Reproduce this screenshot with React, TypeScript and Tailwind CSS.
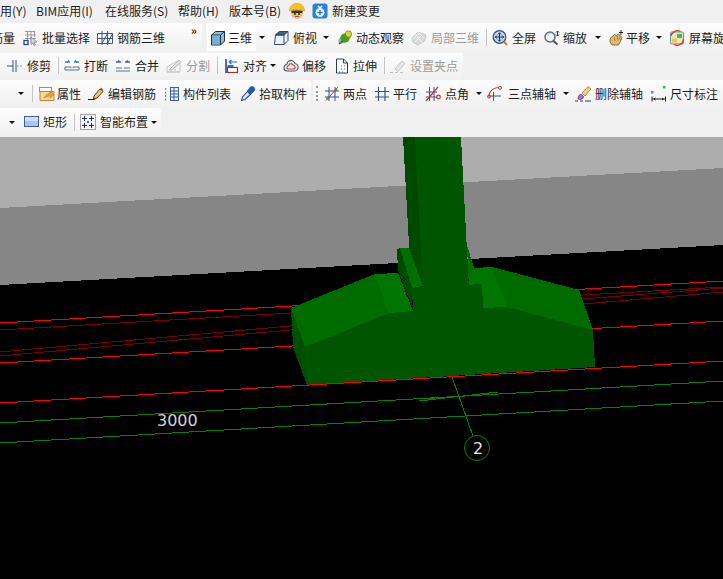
import type { ReactNode } from 'react';

const Ico = ({ children }: { children: ReactNode }) => (
    <svg width="16" height="16" viewBox="0 0 16 16" fill="none" className="shrink-0">
        {children}
    </svg>
);

const Caret = ({ className = '' }: { className?: string }) => (
    <span className={`w-0 h-0 border-x-[3px] border-x-transparent border-t-[3px] border-t-[#111] shrink-0 ${className}`} />
);

const Sep = ({ className = '' }: { className?: string }) => (
    <span className={`w-px h-[17px] bg-[#c4c4c4] shrink-0 ${className}`} />
);

function Tool({
    icon,
    label,
    className = '',
    gray = false,
    gap = 'gap-1',
}: {
    icon: ReactNode;
    label: string;
    className?: string;
    gray?: boolean;
    gap?: string;
}) {
    return (
        <span className={`flex items-center shrink-0 whitespace-nowrap ${gap} ${gray ? 'text-[#9a9a9a]' : ''} ${className}`}>
            {icon}
            <span>{label}</span>
        </span>
    );
}

const icons = {
    batch: (
        <Ico>
            <path d="M2 1.500h10M2 5h11M2 8.500h11M4.500 1v9M8 1v9M11.500 1v6" stroke="#9a9aa5" />
            <rect x="1" y="10.500" width="4" height="4" stroke="#2340a8" strokeWidth="1.300" fill="#fff" />
            <path d="M8 7l6 5-3 .5 1.500 2.500-1.500.5-1-2.500-2 1.500z" fill="#d8d8d8" stroke="#777" strokeWidth=".7" />
        </Ico>
    ),
    rebar3d: (
        <Ico>
            <path d="M.5 3.500h15v10H.5zM5 1v14M10.500 1v14M.5 8.500h15M5 13.500l5.500-10M10.500 13.500l5-10" stroke="#39588c" />
        </Ico>
    ),
    cube: (
        <Ico>
            <path d="M1.500 5l4-3.500h9v9.500l-4 4h-9z" fill="#8dbde0" stroke="#20303f" />
            <path d="M1.500 5h9v10M10.500 5l4-3.500" stroke="#20303f" />
            <path d="M2 5.500h8v9H2z" fill="#79aed6" />
        </Ico>
    ),
    topView: (
        <Ico>
            <path d="M2.500 5l4-3.500h8.500v9l-4 4H1.500z" fill="#e8f2fa" stroke="#2b4a66" />
            <path d="M6.500 1.500h8.500l-4 3.500H2.500z" fill="#32648f" stroke="#2b4a66" />
            <path d="M2.500 5h8.500v10" stroke="#2b4a66" />
        </Ico>
    ),
    orbit: (
        <Ico>
            <ellipse cx="8" cy="8" rx="8" ry="3.800" transform="rotate(-38 8 8)" fill="#a3aea9" />
            <circle cx="8" cy="8" r="4.600" fill="#4e9a22" />
            <circle cx="11.500" cy="4" r="3.200" fill="#cdd92c" stroke="#5f7e14" strokeWidth=".6" />
            <path d="M2 14l4-3" stroke="#2f6a20" strokeWidth="1.500" />
        </Ico>
    ),
    localCube: (
        <Ico>
            <path d="M1 8l6-6 8 3-1.500 6-6.500 4-5-3z" fill="#d9d9d9" stroke="#c6c6c6" />
            <path d="M4.500 4.500l7 8M7.500 2.500l6 6M1.500 9l7-6M4 12l7-7" stroke="#f3f3f3" />
        </Ico>
    ),
    fullscreen: (
        <Ico>
            <circle cx="7.500" cy="7" r="6.300" fill="#c6d5ec" stroke="#32477a" strokeWidth="1.200" />
            <path d="M7.500 2.800v8.400M3.300 7h8.400M6 4.300l1.500-1.500L9 4.300M6 9.700l1.500 1.500L9 9.700M4.800 5.500L3.300 7l1.500 1.500M10.200 5.500L11.700 7l-1.500 1.500" stroke="#1f2f66" />
            <path d="M12 11.500l3 3.500" stroke="#c08a28" strokeWidth="2" />
        </Ico>
    ),
    zoom: (
        <Ico>
            <circle cx="6" cy="7" r="5" fill="#eef2f6" stroke="#5f6b78" strokeWidth="1.500" />
            <path d="M3.500 6a3 3 0 013-2.500" stroke="#b9c3cf" />
            <path d="M9.500 11l4 3.500" stroke="#46505c" strokeWidth="2" />
            <path d="M13.500 1v5M12 2.500L13.500 1 15 2.500M12 4.500L13.500 6 15 4.500" stroke="#333" />
        </Ico>
    ),
    pan: (
        <Ico>
            <path d="M1 12c-.5-3 1-5.500 3-6l1.500-1.500 2 1 2-1.500 2 2 1.500 1.500-1.500 4-2 3.500H3z" fill="#dcbb74" stroke="#6f5424" strokeWidth=".8" />
            <path d="M5 7l1 4M8 6l1 4.500M10.500 6l.5 4" stroke="#8d6c30" strokeWidth=".7" />
            <path d="M12 0v5M10 2.500h4" stroke="#222" />
        </Ico>
    ),
    rotate: (
        <Ico>
            <rect x="1.500" y="2" width="13" height="12" rx="1" fill="#dcebc0" stroke="#6c8fa8" />
            <rect x="3" y="8.500" width="5" height="4" fill="#e9c94a" />
            <rect x="8" y="4" width="5" height="4" fill="#58ad47" />
            <path d="M2 6a6.500 6.500 0 019.500-4.500M14.500 9a6.500 6.500 0 01-9.500 5.500" stroke="#e0342a" strokeWidth="1.300" />
        </Ico>
    ),
    trim: (
        <Ico>
            <path d="M6 2v12M9 2v12" stroke="#34518a" />
            <path d="M0 8h6" stroke="#34518a" />
            <path d="M10 8h1.500M13 8h2" stroke="#7f93bb" />
        </Ico>
    ),
    split: (
        <Ico>
            <path d="M1 4h5M10 4h5M3 4l2-1.500M13 4l-2-1.500" stroke="#2f84d6" strokeWidth="1.400" />
            <path d="M1 9v3h14V9H9v1M7 10V9H1" stroke="#5e7492" />
        </Ico>
    ),
    merge: (
        <Ico>
            <path d="M1 4h5M10 4h5M5 4L3 2.500M11 4l2-1.500" stroke="#3a66b8" strokeWidth="1.400" />
            <path d="M1 10h6M9 10h6M1 13h14" stroke="#5e7492" />
        </Ico>
    ),
    cut: (
        <Ico>
            <path d="M1 14V9l10-6 3 1v10zM1 14h13M5 9v5M9 6v8" stroke="#c8c8c8" />
            <path d="M3 12L13 2l2 2-8 7z" fill="#e3e3e3" stroke="#bcbcbc" />
        </Ico>
    ),
    align: (
        <Ico>
            <path d="M2 1v14" stroke="#1d3d92" strokeWidth="1.500" />
            <rect x="3.500" y="9.500" width="10" height="5" fill="#fff" stroke="#a02b30" strokeWidth="1.200" />
            <rect x="3.500" y="7" width="6" height="2" fill="#2c6fc2" />
            <path d="M5 4h8M5 4l2.500-2M5 4l2.500 2" stroke="#2c6fc2" strokeWidth="1.200" />
        </Ico>
    ),
    offset: (
        <Ico>
            <path d="M1 10c0-3 2-3.500 3-4 .5-3 3-4 5-3.500 2 .3 2.500 2 3 3 2.500.5 3.500 2.500 3 4.500-.5 2.500-2 3-4 3H4c-2 0-3-1-3-3z" fill="#f3f0ee" stroke="#4a566b" strokeWidth="1.100" />
            <path d="M4 10c0-2 1.500-2 2-3 .5-1.500 2.500-2 3.500-.5.5 1 1.800.7 2.500 2 .5 1.500 0 2.500-2 2.500H5.500C4.500 11 4 10.700 4 10z" stroke="#d8413a" strokeWidth="1.200" />
        </Ico>
    ),
    stretch: (
        <Ico>
            <path d="M2.500 1h7l4 4v10h-11z" fill="#fff" stroke="#2f3c58" />
            <path d="M9.500 1v4h4" stroke="#2f3c58" />
            <path d="M7 8h1M10 8h1M7 11h1M10 11h1M5 14h1M8 14h1" stroke="#607090" />
        </Ico>
    ),
    grip: (
        <Ico>
            <path d="M0 14.500h3M5 14.500h3M10 14.500h3" stroke="#bdbdbd" strokeWidth="1.200" />
            <path d="M5 11l7-8 3 2.500-7 8z" fill="#e6e6e6" stroke="#c2c2c2" />
        </Ico>
    ),
    attr: (
        <Ico>
            <rect x=".5" y="1.500" width="12" height="4" fill="#fff" stroke="#c4823c" />
            <path d="M1 5.500h14v9H1z" fill="#f6d98e" stroke="#c4823c" />
            <path d="M5 12c2-3 4-4.500 6-5v-2l4 3.500-4 3.500v-2c-2 0-4 .5-6 2z" fill="#e8a63c" stroke="#97651c" strokeWidth=".5" />
        </Ico>
    ),
    editBar: (
        <Ico>
            <path d="M0 13.500h6l2-1.500 1-.5" stroke="#222" strokeWidth="1.200" />
            <path d="M6 10l6-7 3 2.500-6 6.500-3.500 1z" fill="#e6c878" stroke="#5a3c1c" />
            <path d="M12 3l1-1.500 2.500 2.500-1 1z" fill="#c04436" />
        </Ico>
    ),
    list: (
        <Ico>
            <path d="M1 3h2M1 6.500h2M1 10h2M1 13.500h2" stroke="#4f6f96" strokeWidth="1.400" strokeDasharray="1.200 .8" />
            <rect x="6.500" y="1.500" width="8" height="13" fill="#eef3f9" stroke="#3b5f92" />
            <path d="M7 5h7M7 8h7M7 11h7M10 2v12" stroke="#3b5f92" />
        </Ico>
    ),
    pick: (
        <Ico>
            <path d="M1.500 14.500l1-3.500 5-5.500 3 3-5.500 5z" fill="#dbe9f7" stroke="#244c96" strokeWidth="1.100" />
            <path d="M7.500 4.500l1-1 2-2.500c1-1 2.500-.5 3.500.5s1 2.500 0 3.500l-2 2-1 1z" fill="#2559ad" stroke="#1c3e80" strokeWidth=".7" />
        </Ico>
    ),
    twoPoint: (
        <Ico>
            <path d="M5 1v14M11 1v14M1 5h14M1 11h14" stroke="#3a5186" />
            <path d="M2 14.500L14 1" stroke="#cf2c2c" />
            <circle cx="3.500" cy="12.500" r="1.300" fill="#4e8f2e" />
            <circle cx="12" cy="3.500" r="1.300" fill="#4e8f2e" />
        </Ico>
    ),
    parallel: (
        <Ico>
            <path d="M4.500 1v14M11 1v14M1 5.500h14M1 11h14" stroke="#3a5186" strokeWidth="1.200" />
        </Ico>
    ),
    angle: (
        <Ico>
            <path d="M4.500 1v14M9 1v14M1 6h11M1 11h11" stroke="#3a5186" />
            <path d="M1 15L13 1" stroke="#cf2c2c" strokeWidth="1.200" />
            <circle cx="13.500" cy="11" r="1.800" stroke="#cf2c2c" strokeWidth="1.200" />
        </Ico>
    ),
    arc: (
        <Ico>
            <path d="M6.500 6v9M1 10h13" stroke="#3a5186" />
            <path d="M2 10c.5-4.500 4-8 9-8.500" stroke="#cf2c2c" strokeWidth="1.200" />
            <circle cx="13" cy="1.800" r="1.500" stroke="#cf2c2c" />
            <circle cx="2" cy="10.500" r="1.500" stroke="#cf2c2c" />
        </Ico>
    ),
    eraser: (
        <Ico>
            <path d="M0 15h3M5 15h3M10 15h6" stroke="#335" />
            <path d="M3 13c0-2.500 1-4 3-5l3 3c-1 2-3 3-6 2z" fill="#9c78b8" stroke="#5a3d78" strokeWidth=".7" />
            <path d="M7 7l6-6.500 3 2.500-6 7z" fill="#e8d08a" stroke="#8f6a2a" strokeWidth=".7" />
        </Ico>
    ),
    dim: (
        <Ico>
            <rect x="0" y="5" width="2.500" height="2.500" fill="#46b04a" />
            <rect x="12" y="0" width="2.500" height="2.500" fill="#46b04a" />
            <path d="M1 10.500v5M14.500 10.500v5M1 13h13.500M3 13l1.500-1M3 13l1.500 1M12.500 13L11 12M12.500 13L11 14" stroke="#222" />
        </Ico>
    ),
    rect: (
        <Ico>
            <rect x=".5" y="2.500" width="14" height="10" fill="#a9c4f0" stroke="#3d5fa6" />
            <rect x="1" y="3" width="13" height="4" fill="#d0e0f8" />
        </Ico>
    ),
    smart: (
        <Ico>
            <rect x=".5" y=".5" width="15" height="15" fill="#f4f4f4" stroke="#555" strokeDasharray="1 1" />
            <path d="M4.500 2v5M2 4.500h5M11.500 2v5M9 4.500h5M4.500 9v5M2 11.500h5M11.500 9v5M9 11.500h5" stroke="#26304a" />
            <rect x="7" y="7" width="2" height="2" fill="#2f6ac0" />
        </Ico>
    ),
};

const rows = 'h-[27px] flex items-center bg-linear-to-b from-[#fdfdfd] to-[#f0f0f0]';

export default function App() {
    return (
        <div
            className="w-[723px] h-[579px] overflow-hidden bg-[#f0f0f0] text-[12px] text-[#1c1c1c] flex flex-col"
            style={{ fontFamily: '"Noto Sans CJK SC", "Noto Sans", sans-serif' }}
        >
            {/* menu */}
            <div className="h-[23px] flex items-center whitespace-nowrap">
                <span className="w-[36px]">用(Y)</span>
                <span className="w-[69px]">BIM应用(I)</span>
                <span className="w-[73px]">在线服务(S)</span>
                <span className="w-[51px]">帮助(H)</span>
                <span className="w-[60px]">版本号(B)</span>
                <svg width="16" height="16" viewBox="0 0 16 16" className="shrink-0">
                    <circle cx="8" cy="10" r="6" fill="#e8b98c" />
                    <path d="M.5 8C.5 3 4 .5 8 .5s7.500 2.500 7.500 7.500l-3.500-1.500H4z" fill="#f5c518" stroke="#c08c10" strokeWidth=".5" />
                    <path d="M2 8c1.500-.8 10.500-.8 12 0l-1 2H3z" fill="#4a2e18" />
                    <circle cx="6" cy="11" r=".9" fill="#222" />
                    <circle cx="10" cy="11" r=".9" fill="#222" />
                    <path d="M6 13.500h4" stroke="#a0503c" />
                </svg>
                <svg width="16" height="16" viewBox="0 0 16 16" className="ml-[7px] mr-[4px] shrink-0">
                    <rect x=".5" y=".5" width="15" height="15" rx="3" fill="#2f7fd8" />
                    <circle cx="8" cy="9.500" r="4.500" fill="#d8ecfb" />
                    <path d="M6 3l2 2 2-2" stroke="#fff" strokeWidth="1.300" fill="none" />
                    <path d="M5.500 9.500h5M8 7v5" stroke="#2268bc" strokeWidth="1.200" />
                </svg>
                <span>新建变更</span>
            </div>

            {/* row 2 */}
            <div className="h-[30px] flex items-center gap-[4px]">
                <div className="w-[202px] h-full flex items-center bg-linear-to-b from-[#fdfdfd] to-[#f0f0f0] rounded-r-sm relative">
                    <span className="w-[15px] overflow-hidden flex justify-end shrink-0 whitespace-nowrap">筋量</span>
                    <Tool icon={icons.batch} label="批量选择" className="ml-[8px] w-[74px]" gap="gap-[3px]" />
                    <Tool icon={icons.rebar3d} label="钢筋三维" />
                    <span className="absolute left-[191px] top-[0px] text-[11px] font-bold leading-[14px]">»</span>
                </div>
                <div className="flex-1 h-full flex items-center bg-linear-to-b from-[#fdfdfd] to-[#f0f0f0] overflow-hidden">
                    <span className="ml-[1px] h-[26px] flex items-center gap-[2px] bg-white pl-[3px] pr-[4px] shrink-0">
                        {icons.cube}
                        <span>三维</span>
                    </span>
                    <Caret className="ml-[3px]" />
                    <Tool icon={icons.topView} label="俯视" className="ml-[8px]" />
                    <Caret className="ml-[6px]" />
                    <Tool icon={icons.orbit} label="动态观察" className="ml-[8px]" gap="gap-[3px]" />
                    <Tool icon={icons.localCube} label="局部三维" className="ml-[7px]" gray />
                    <Sep className="ml-[7px]" />
                    <Tool icon={icons.fullscreen} label="全屏" className="ml-[5px]" />
                    <Tool icon={icons.zoom} label="缩放" className="ml-[8px]" gap="gap-[3px]" />
                    <Caret className="ml-[8px]" />
                    <Tool icon={icons.pan} label="平移" className="ml-[8px]" gap="gap-[1px]" />
                    <Caret className="ml-[6px]" />
                    <Tool icon={icons.rotate} label="屏幕旋" className="ml-[7px]" />
                </div>
            </div>

            {/* row 3 */}
            <div className={`${rows} w-[463px] mb-[1px]`}>
                <Tool icon={icons.trim} label="修剪" className="ml-[7px]" gap="gap-[4px]" />
                <Sep className="ml-[7px]" />
                <Tool icon={icons.split} label="打断" className="ml-[5px]" />
                <Tool icon={icons.merge} label="合并" className="ml-[7px]" />
                <Tool icon={icons.cut} label="分割" className="ml-[7px]" gray />
                <Sep className="ml-[7px]" />
                <Tool icon={icons.align} label="对齐" className="ml-[6px]" gap="gap-[3px]" />
                <Caret className="ml-[3px]" />
                <Tool icon={icons.offset} label="偏移" className="ml-[7px]" gap="gap-[3px]" />
                <Tool icon={icons.stretch} label="拉伸" className="ml-[8px]" gap="gap-[3px]" />
                <Sep className="ml-[7px]" />
                <Tool icon={icons.grip} label="设置夹点" className="ml-[5px]" gap="gap-[4px]" gray />
            </div>

            {/* row 4 */}
            <div className="h-[27px] flex items-center gap-[2px] mb-[1px]">
                <div className={`${rows} w-[311px] rounded-r-sm`}>
                    <Caret className="ml-[18px]" />
                    <Sep className="ml-[8px]" />
                    <Tool icon={icons.attr} label="属性" className="ml-[6px]" gap="gap-[2px]" />
                    <Tool icon={icons.editBar} label="编辑钢筋" className="ml-[7px]" gap="gap-[4px]" />
                    <Tool icon={icons.list} label="构件列表" className="ml-[8px]" gap="gap-[3px]" />
                    <Tool icon={icons.pick} label="拾取构件" className="ml-[9px]" gap="gap-[3px]" />
                </div>
                <div className={`${rows} flex-1 overflow-hidden`}>
                    <span className="ml-[3px] w-[2px] h-[15px] border-l-2 border-dotted border-[#999] shrink-0" />
                    <Tool icon={icons.twoPoint} label="两点" className="ml-[6px]" gap="gap-[3px]" />
                    <Tool icon={icons.parallel} label="平行" className="ml-[7px]" gap="gap-[3px]" />
                    <Tool icon={icons.angle} label="点角" className="ml-[8px]" gap="gap-[4px]" />
                    <Caret className="ml-[7px]" />
                    <Tool icon={icons.arc} label="三点辅轴" className="ml-[5px]" gap="gap-[5px]" />
                    <Caret className="ml-[7px]" />
                    <Tool icon={icons.eraser} label="删除辅轴" className="ml-[6px]" gap="gap-[4px]" />
                    <Tool icon={icons.dim} label="尺寸标注" className="ml-[8px]" gap="gap-[3px]" />
                </div>
            </div>

            {/* row 5 */}
            <div className={`${rows} w-[161px] h-[28px] rounded-r-sm`}>
                <Caret className="ml-[9px]" />
                <Tool icon={icons.rect} label="矩形" className="ml-[9px]" gap="gap-[3px]" />
                <Sep className="ml-[7px]" />
                <Tool icon={icons.smart} label="智能布置" className="ml-[5px]" />
                <Caret className="ml-[3px]" />
            </div>

            {/* 3d viewport */}
            <svg
                viewBox="0 137 723 442"
                width="723"
                height="442"
                className="block mt-[1px] shrink-0 bg-black"
                shapeRendering="crispEdges"
            >
                <polygon points="0,137 723,137 723,168 0,208" fill="#adadad" />
                <polygon points="0,208 723,168 723,245 0,285" fill="#868686" />

                <g fill="none" stroke="#7a0000">
                    <polyline points="0,330 290,313 583,295 723,287" />
                    <polyline points="0,352 290,326 583,304 723,292" />
                    <polyline points="0,356 290,330 583,299 723,288" />
                </g>
                <g fill="none" stroke="#ff0000">
                    <line x1="0" y1="323" x2="723" y2="281" />
                    <line x1="0" y1="363" x2="723" y2="321" />
                </g>

                <polygon points="403,137 415,137 423,290 412,290 409,245" fill="#004a00" />
                <polygon points="415,137 461,137 469,290 423,290" fill="#005600" />
                <polygon points="467,245 474,268 474,290 469,290" fill="#006e00" />
                <polygon points="400,248 409,248 423,286 412,288" fill="#007000" />
                <polygon points="397,249 400,248 412,288 412,307 398,270" fill="#004a00" />
                <polygon points="291,308 375,274 389,313 305,347" fill="#006c00" />
                <polygon points="375,274 398,273 413,311 413,315 389,315" fill="#007600" />
                <polygon points="291,308 305,347 307,385 293,347" fill="#004f00" />
                <polygon points="492,267 579,290 593,330 507,307" fill="#006c00" />
                <polygon points="474,268 492,267 507,307 507,312 483,312 469,290 469,284" fill="#007600" />
                <polygon
                    points="305,347 389,313 413,311 412,288 482,284 483,308 507,307 593,330 595,367 307,385"
                    fill="#005600"
                />

                <line x1="0" y1="403" x2="723" y2="361" stroke="#ff0000" />
                <g fill="none" stroke="#0a8000">
                    <line x1="0" y1="423" x2="723" y2="381" />
                    <line x1="0" y1="443" x2="723" y2="401" />
                    <line x1="419" y1="401" x2="498" y2="392" />
                    <line x1="421" y1="399" x2="477" y2="395" />
                    <line x1="452" y1="377" x2="473" y2="436" />
                    <circle cx="477" cy="448" r="12.500" shapeRendering="auto" />
                </g>
                <text x="157" y="426" fill="#d4d4d4" fontSize="16" fontFamily='"DejaVu Sans", sans-serif'>
                    3000
                </text>
                <text x="473" y="454" fill="#e4e4e4" fontSize="16" fontFamily='"DejaVu Sans", sans-serif'>
                    2
                </text>
            </svg>
        </div>
    );
}
